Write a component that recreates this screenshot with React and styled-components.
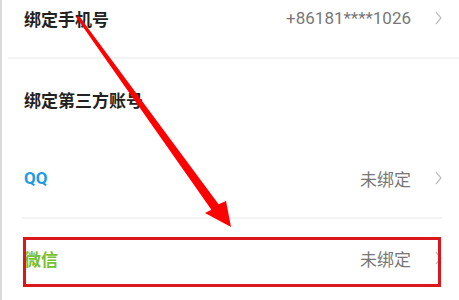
import React from "react";
import styled, { createGlobalStyle } from "styled-components";

const GlobalStyle = createGlobalStyle`
  html, body {
    margin: 0;
    padding: 0;
    background: #fff;
  }
  body {
    font-family: "Roboto", "Noto Sans CJK SC", sans-serif;
  }
`;

const Page = styled.div`
  position: relative;
  width: 459px;
  height: 300px;
  overflow: hidden;
  background: #fff;
  border-left: 2px solid #d9d9d9;
  box-sizing: border-box;
`;

const Row = styled.div`
  display: flex;
  align-items: center;
  height: ${p => p.h}px;
  margin-top: ${p => p.offset || 0}px;
  padding: 0 17px 0 22px;
  position: relative;
`;

const Title = styled.div`
  flex: 1;
  font-size: 17px;
  font-weight: 700;
  color: ${p => p.color || "#222"};
`;

const Value = styled.div`
  font-size: 17px;
  color: #777;
  margin-right: 24px;
`;

const Chevron = styled.svg`
  width: 7px;
  height: 14px;
  flex: none;
`;

const Divider = styled.div`
  height: 2px;
  background: #f3f3f3;
  margin: ${p => p.inset || "0"};
`;

const HighlightBox = styled.div`
  position: absolute;
  left: 21px;
  right: 18px;
  top: 18px;
  height: 50px;
  border: 3px solid #db161d;
  box-sizing: border-box;
  pointer-events: none;
`;

const Arrow = styled.svg`
  position: absolute;
  left: 0;
  top: 0;
  width: 459px;
  height: 300px;
  pointer-events: none;
`;

const Arrowhead = () => (
  <Chevron viewBox="0 0 7 14">
    <path d="M1 1 L6 7 L1 13" fill="none" stroke="#bdbdbd" strokeWidth="1.2" />
  </Chevron>
);

export default function App() {
  return (
    <>
      <GlobalStyle />
      <Page>
        <Row h={78} offset={-21}>
          <Title>绑定手机号</Title>
          <Value>+86181****1026</Value>
          <Arrowhead />
        </Row>
        <Divider inset="0 0 0 6px" />
        <Row h={80}>
          <Title>绑定第三方账号</Title>
        </Row>
        <Row h={78}>
          <Title color="#1d9be6">QQ</Title>
          <Value>未绑定</Value>
          <Arrowhead />
        </Row>
        <Divider inset="0 17px 0 20px" />
        <Row h={78}>
          <Title color="#78c02e">微信</Title>
          <Value>未绑定</Value>
          <Arrowhead />
          <HighlightBox />
        </Row>
        <Arrow viewBox="0 0 459 300">
          <polygon
            points="74,17 77,16 216.6,204.3 224,201 229,227 203,213 209.4,209.7"
            fill="#ff0000"
          />
        </Arrow>
      </Page>
    </>
  );
}
